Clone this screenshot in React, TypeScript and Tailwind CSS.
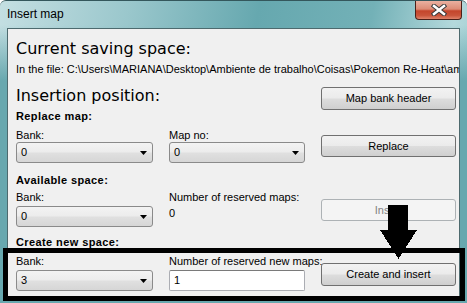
import { ReactNode } from "react";

// Win7 style push button
function Button({ children, disabled, className = "" }: { children: ReactNode; disabled?: boolean; className?: string }) {
  return (
    <div
      className={
        "flex w-[135px] items-center justify-center rounded-[3px] border " +
        (disabled
          ? "border-[#adb2b5] bg-[#f4f4f4] text-[#838383] "
          : "border-[#707070] bg-[linear-gradient(#f2f2f2_0%,#ebebeb_48%,#dddddd_52%,#cfcfcf_100%)] text-black ") +
        className
      }
    >
      {children}
    </div>
  );
}

function Combo({ value, wide = true }: { value: string; wide?: boolean }) {
  return (
    <div
      className={
        "mt-[2px] flex h-[21px] items-center justify-between rounded-[3px] border border-[#8a8a8a] bg-[linear-gradient(#f3f3f3_0%,#ececec_48%,#e0e0e0_52%,#d6d6d6_100%)] pl-[4px] pr-[5px] " +
        (wide ? "w-[137px]" : "w-[136px]")
      }
    >
      <span>{value}</span>
      <svg width="7" height="4" viewBox="0 0 7 4">
        <polygon points="0,0 7,0 3.5,4" fill="#000" />
      </svg>
    </div>
  );
}

function Label({ children }: { children: ReactNode }) {
  return <div className="h-[13px] leading-[13px] whitespace-nowrap">{children}</div>;
}

function Section({ children, className = "" }: { children: ReactNode; className?: string }) {
  return <div className={"h-[13px] font-bold leading-[13px] tracking-[0.4px] " + className}>{children}</div>;
}

function CloseButton() {
  return (
    <div className="mr-[5px] flex h-[19px] w-[47px] items-center justify-center rounded-b-[4px] border border-t-0 border-[#4a2019] bg-[linear-gradient(#eab0a0_0%,#dc8c76_45%,#c4452b_55%,#c9543a_80%,#e0836a_100%)]">
      <svg width="16" height="12" viewBox="0 0 16 12">
        <g strokeLinecap="square">
          <path d="M3 2 L13 10 M13 2 L3 10" stroke="#3b3b3b" strokeWidth="4.5" />
          <path d="M3 2 L13 10 M13 2 L3 10" stroke="#ffffff" strokeWidth="2.5" />
        </g>
      </svg>
    </div>
  );
}

export default function App() {
  return (
    <div className="relative h-[303px] w-[467px] overflow-hidden rounded-t-[6px] border-t border-[#34575c] bg-[linear-gradient(180deg,rgba(104,168,175,0)_0px,rgba(104,168,175,0)_24px,#68a8af_80px),linear-gradient(100deg,#c4dfe2_0%,#9ac7cc_25%,#66a8af_50%,#73b1b7_72%,#b4d9dc_88%,#8fc3c8_100%)] font-['Liberation_Sans',Arial,sans-serif] text-[11px] text-black">
      {/* title bar */}
      <div className="flex h-[27px] items-start justify-between">
        <span className="pl-[7px] pt-[6px] text-[12px] leading-[14px]">Insert map</span>
        <CloseButton />
      </div>

      {/* client area */}
      <div className="ml-[7px] h-[271px] w-[453px] overflow-hidden border border-[#4d6a6e] bg-[#f0f0f0] pl-[8px] pr-[3px]">
        <div className="mt-[10px] h-[19px] font-['DejaVu_Sans',sans-serif] text-[16px] leading-[19px]">Current saving space:</div>
        <div className="mt-[5px] mr-[-3px] h-[13px] overflow-hidden whitespace-nowrap leading-[13px]">
          In the file: C:\Users\MARIANA\Desktop\Ambiente de trabalho\Coisas\Pokemon Re-Heat\am1.gba
        </div>

        <div className="mt-[10px] flex items-start justify-between">
          <div className="h-[19px] font-['DejaVu_Sans',sans-serif] text-[16px] leading-[19px]">Insertion position:</div>
          <Button className="mt-[1px] h-[23px]">Map bank header</Button>
        </div>

        <Section>Replace map:</Section>
        <div className="mt-[6px] grid grid-cols-[137px_136px_135px] gap-x-[16px]">
          <div>
            <Label>Bank:</Label>
            <div className="mt-[-2px]">
              <Combo value="0" />
            </div>
          </div>
          <div>
            <Label>Map no:</Label>
            <div className="mt-[-2px]">
              <Combo value="0" wide={false} />
            </div>
          </div>
          <Button className="mt-[6px] h-[22px]">Replace</Button>
        </div>

        <Section className="mt-[11px]">Available space:</Section>
        <div className="mt-[4px] grid grid-cols-[137px_136px_135px] gap-x-[16px]">
          <div>
            <Label>Bank:</Label>
            <Combo value="0" />
          </div>
          <div>
            <Label>Number of reserved maps:</Label>
            <div className="mt-[3px] h-[13px] leading-[13px]">0</div>
          </div>
          <Button disabled className="mt-[8px] h-[22px]">Insert</Button>
        </div>

        <Section className="mt-[9px]">Create new space:</Section>
        <div className="mt-[6px] grid grid-cols-[137px_136px_135px] gap-x-[16px]">
          <div>
            <Label>Bank:</Label>
            <Combo value="3" />
          </div>
          <div>
            <Label>Number of reserved new maps:</Label>
            <div className="mt-[2px] flex h-[21px] w-[136px] items-center rounded-[2px] border border-[#abadb3] border-t-[#7a7a7a] bg-white pl-[4px]">
              1
            </div>
          </div>
          <Button className="mt-[8px] h-[23px]">Create and insert</Button>
        </div>
      </div>

      {/* highlight frame drawn over the dialog */}
      <div className="pointer-events-none absolute left-[3px] top-[247px] h-[53px] w-[462px] border-[5px] border-black" />

      {/* big arrow */}
      <svg
        className="pointer-events-none absolute left-[379px] top-[203px]"
        width="40"
        height="57"
        viewBox="0 0 40 57"
        shapeRendering="crispEdges"
      >
        <rect x="9" y="1" width="20" height="26" fill="#000" />
        <polygon points="1,26 38,26 19.5,55" fill="#000" />
      </svg>
    </div>
  );
}
